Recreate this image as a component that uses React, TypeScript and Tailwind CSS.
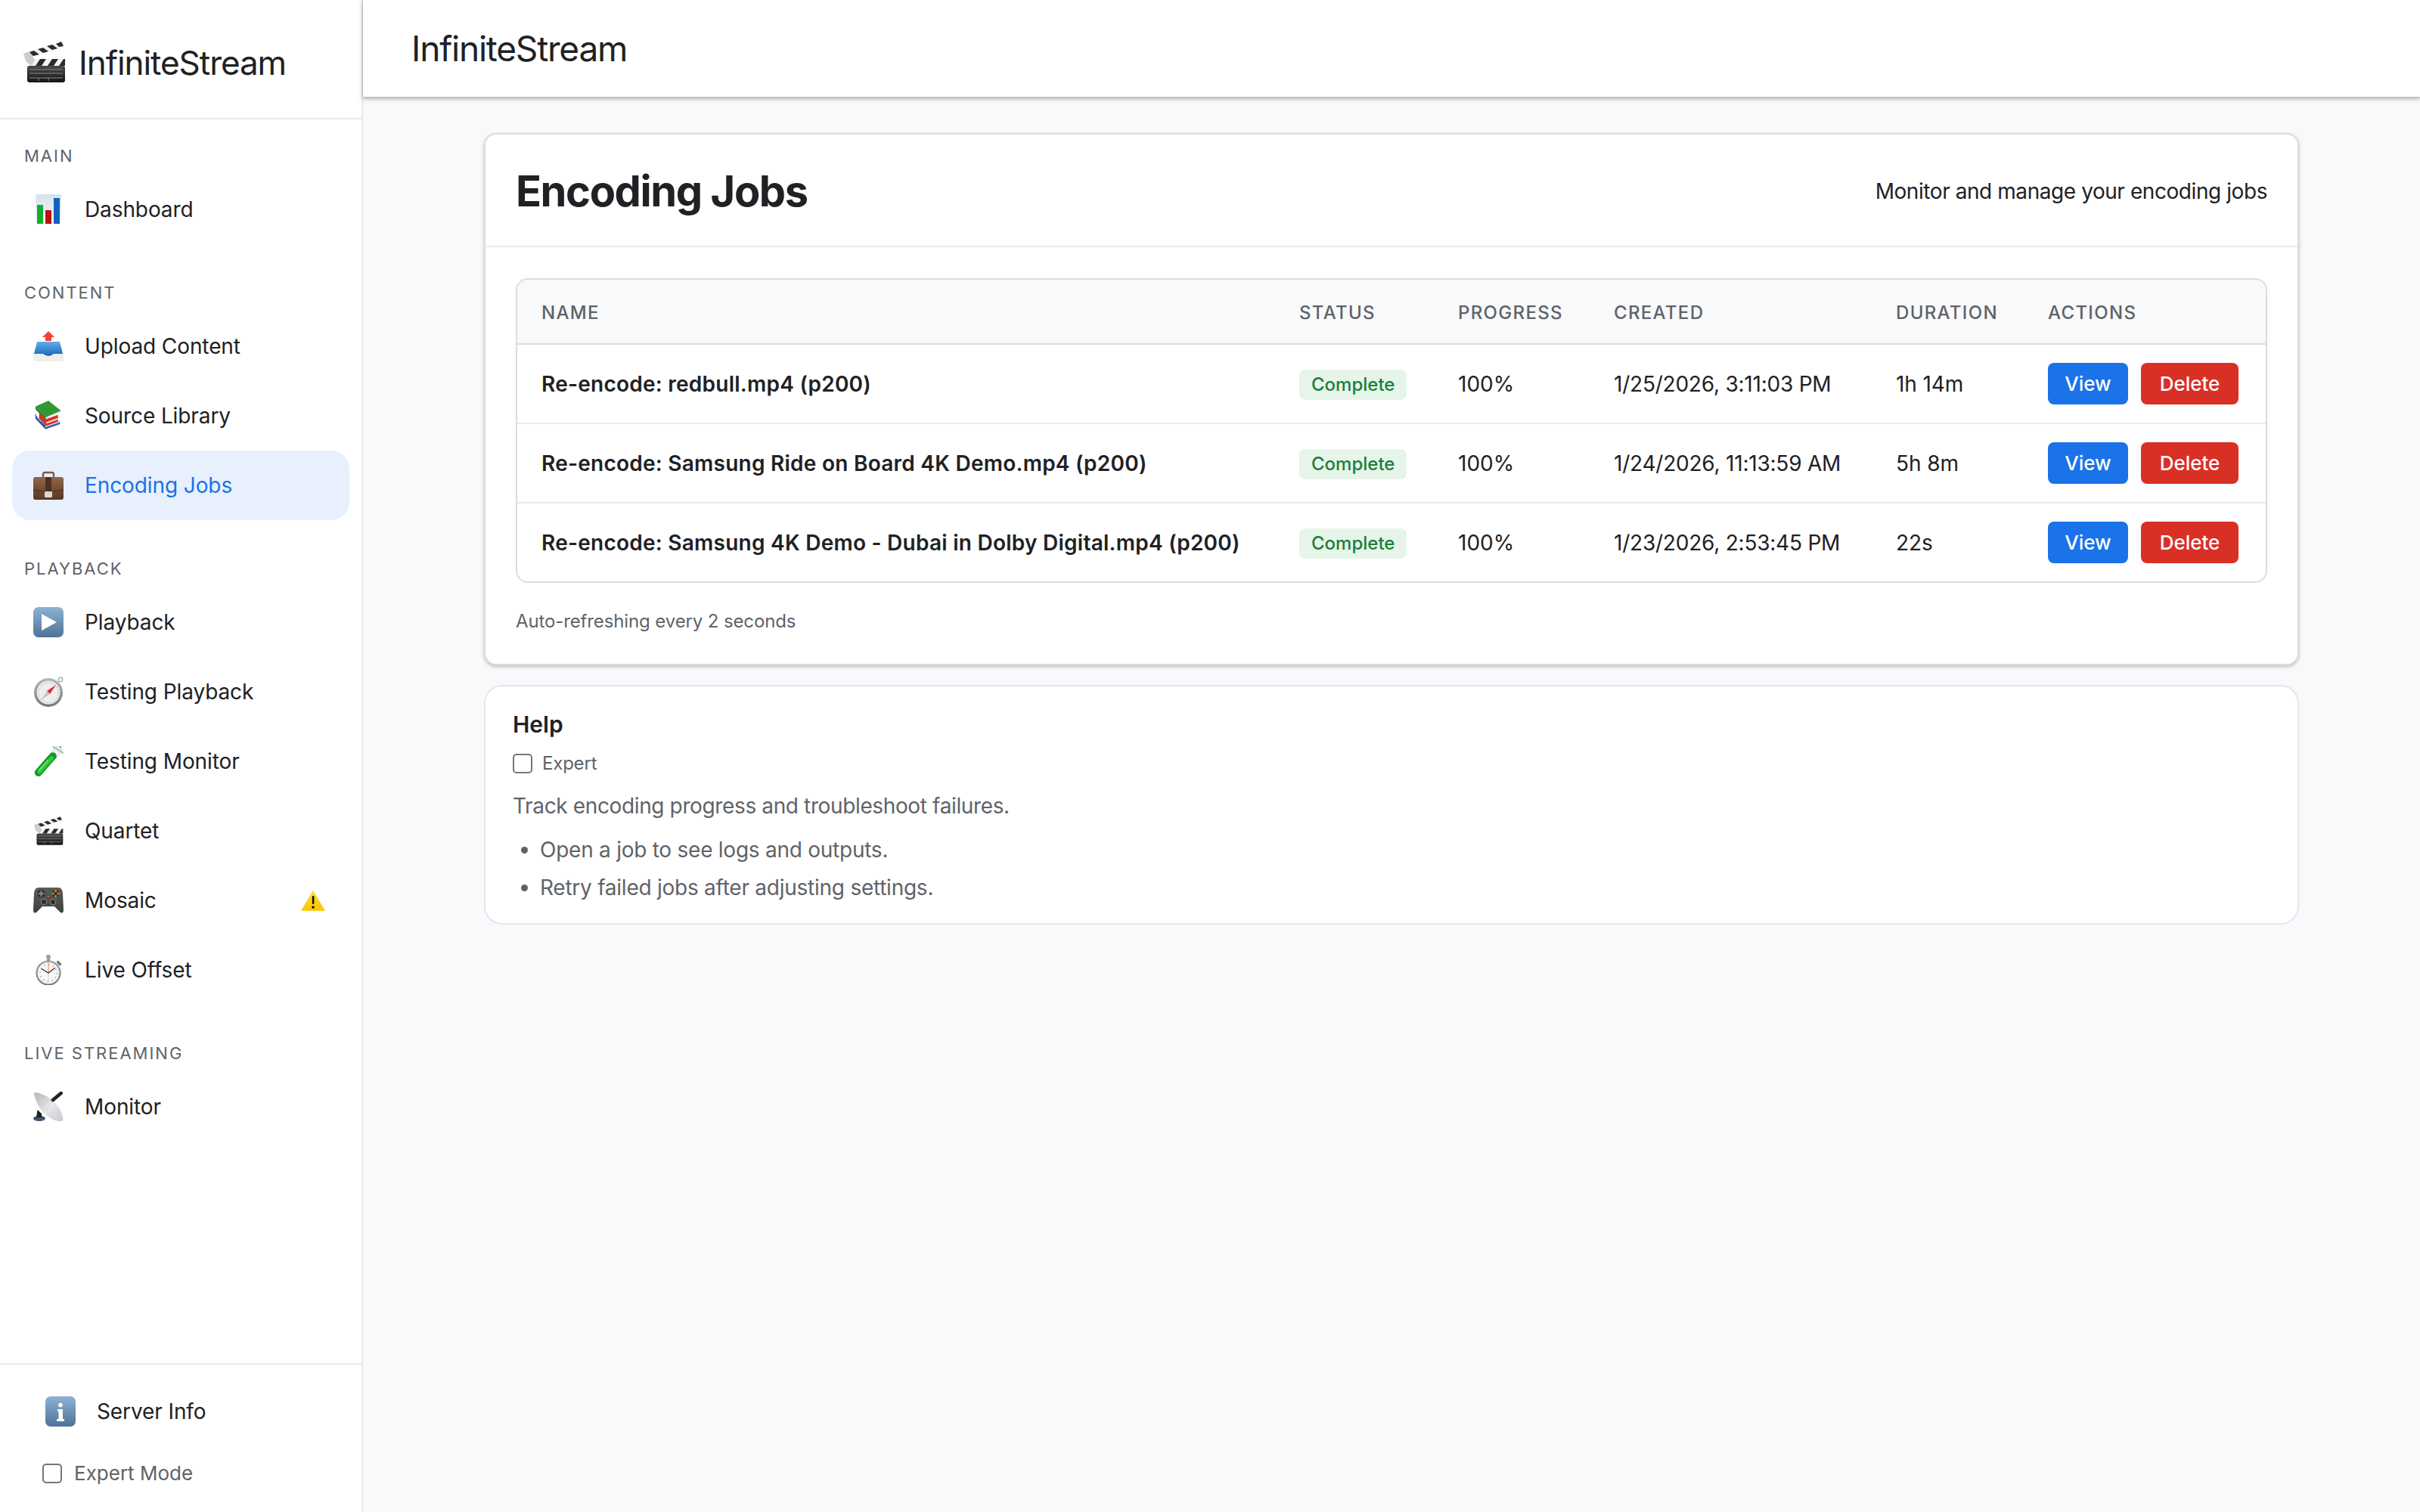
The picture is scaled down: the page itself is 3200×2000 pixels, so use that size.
import type { ReactNode } from "react";

function Clapper({ className }: { className?: string }) {
  return (
    <svg viewBox="0 0 56 54" className={className}>
      <defs>
        <linearGradient id="clapBody" x1="0" y1="0" x2="0" y2="1">
          <stop offset="0" stopColor="#4a4a4a" />
          <stop offset="1" stopColor="#151515" />
        </linearGradient>
      </defs>
      <path d="M0 16 L51 0 L54 7 L4 23 Z" fill="#f2f2f2" />
      <path d="M7 14 L14 12 L21 17 L13 19 Z M19 10 L26 8 L33 13 L26 15 Z M31 6 L38 4 L45 9 L38 11 Z M43 3 L50 0 L53 6 L47 7 Z" fill="#2c2c2c" />
      <path d="M13 23 H55 V32 H10 Z" fill="#f4f4f4" />
      <path d="M16 32 L22 23 H30 L24 32 Z M32 32 L38 23 H46 L40 32 Z M47 32 L53 23 H55 V32 Z" fill="#2b2b2b" />
      <path d="M0 16 L8 13 L15 25 L10 32 L3 26 Z" fill="#c9ced1" />
      <rect x="5" y="32" width="50" height="22" rx="3" fill="url(#clapBody)" />
      <path d="M8 37 H52 M8 42 H52 M8 48 H52" stroke="#8a8a8a" strokeWidth="1" />
      <path d="M20 48 V52 M33 48 V52" stroke="#8a8a8a" strokeWidth="1" />
    </svg>
  );
}

function BarChart() {
  return (
    <svg viewBox="0 0 40 40" className="w-[40px] h-[40px]">
      <defs>
        <linearGradient id="chartBg" x1="0" y1="0" x2="0" y2="1">
          <stop offset="0" stopColor="#d5e2ec" />
          <stop offset="1" stopColor="#f8fafb" />
        </linearGradient>
      </defs>
      <rect x="3" y="0" width="34" height="40" fill="url(#chartBg)" />
      <rect x="5" y="14" width="8" height="25" fill="#12b02d" />
      <rect x="16" y="21" width="8" height="18" fill="#bd1010" />
      <rect x="27" y="5" width="8" height="34" fill="#1360c0" />
    </svg>
  );
}

function Upload() {
  return (
    <svg viewBox="0 0 40 40" className="w-[40px] h-[40px]">
      <defs>
        <linearGradient id="trayBlue" x1="0" y1="0" x2="0" y2="1">
          <stop offset="0" stopColor="#63aee8" />
          <stop offset="1" stopColor="#1667b8" />
        </linearGradient>
      </defs>
      <path d="M20 0 L28 8 H24 V13 H16 V8 H12 Z" fill="#f2423c" />
      <path d="M5 17 H35 L40 30 V38 Q40 40 38 40 H2 Q0 40 0 38 V30 Z" fill="#eff0ec" />
      <path d="M5 14 H35 L39 30 H27 Q20 36 13 30 H1 Z" fill="url(#trayBlue)" />
    </svg>
  );
}

function Books() {
  return (
    <svg viewBox="0 -1 40 40" className="w-[40px] h-[40px]">
      <path d="M2 15.7 L3.3 23.3 L16 36.7 L35.3 30 V25.7 L17.7 32.3 L7.7 24.3 Z" fill="#2f57ab" />
      <path d="M15.5 34.2 L35 27.5 V25.7 L16.5 32.3 Z" fill="#e8e8e8" />
      <path d="M7.7 14.3 L16.7 23.3 L32.7 17.7 V26.7 L17.7 32.3 L7.7 23.3 Z" fill="#d8322a" />
      <path d="M17.5 29.2 L32.7 23.7 V22 L17 27.5 Z" fill="#f4eee6" />
      <path d="M2.7 6.7 L3.3 11 L16.7 23.3 V21 Z" fill="#1f7a27" />
      <path d="M16.7 21 L36.7 12.3 L36 15.7 L17.3 23.3 Z" fill="#f0f3e8" />
      <path d="M2.7 6.7 L20 -1 L36.7 12.3 L16.7 21 Z" fill="#2f9a34" />
    </svg>
  );
}

function Briefcase() {
  return (
    <svg viewBox="0 0 40 40" className="w-[40px] h-[40px]">
      <defs>
        <linearGradient id="caseBody" x1="0" y1="0" x2="0" y2="1">
          <stop offset="0" stopColor="#8f674b" />
          <stop offset="1" stopColor="#593724" />
        </linearGradient>
      </defs>
      <rect x="13" y="3" width="14" height="9" rx="2.5" fill="none" stroke="#7b5a44" strokeWidth="2.4" />
      <rect x="0" y="9" width="40" height="30" rx="3" fill="url(#caseBody)" />
      <path d="M0 26 Q20 31 40 26" fill="none" stroke="#4a2c1b" strokeWidth="1" />
      <rect x="16" y="9" width="8" height="20" fill="#4e3020" />
      <rect x="15" y="28" width="10" height="8" rx="1" fill="#d9d9d5" />
    </svg>
  );
}

function BlueSquare({ id, children }: { id: string; children: ReactNode }) {
  return (
    <svg viewBox="0 0 40 40" className="w-[40px] h-[40px]">
      <defs>
        <linearGradient id={id} x1="0" y1="0" x2="0" y2="1">
          <stop offset="0" stopColor="#8db2d4" />
          <stop offset="1" stopColor="#4f7398" />
        </linearGradient>
      </defs>
      <rect x="0" y="0" width="40" height="40" rx="7" fill={`url(#${id})`} />
      {children}
    </svg>
  );
}

function Compass() {
  return (
    <svg viewBox="0 0 40 40" className="w-[40px] h-[40px]">
      <defs>
        <linearGradient id="compassRim" x1="0" y1="0" x2="0" y2="1">
          <stop offset="0" stopColor="#b4b8ba" />
          <stop offset="1" stopColor="#73787a" />
        </linearGradient>
      </defs>
      <circle cx="36" cy="4" r="2.8" fill="#fff" stroke="#9a9ea0" strokeWidth="1.2" />
      <circle cx="20" cy="21" r="19" fill="url(#compassRim)" />
      <circle cx="20" cy="21" r="15.5" fill="#eeeeec" />
      <circle cx="20" cy="21" r="13" fill="none" stroke="#bbb" strokeWidth="2" strokeDasharray="1 2.5" />
      <path d="M30 11 L22 23 L18 19 Z" fill="#e8262a" />
      <path d="M10 31 L22 23 L18 19 Z" fill="#c8c8c8" />
    </svg>
  );
}

function TestTube() {
  return (
    <svg viewBox="0 0 40 40" className="w-[40px] h-[40px]">
      <path d="M32.7 5.3 L6.7 35" stroke="#c9d6cc" strokeWidth="10.5" strokeLinecap="round" />
      <path d="M32.7 5.3 L6.7 35" stroke="#eef3ef" strokeWidth="8.5" strokeLinecap="round" />
      <path d="M26 13 L6.7 35" stroke="#0f9a20" strokeWidth="9.5" strokeLinecap="round" />
      <path d="M24 16 L8 34" stroke="#35c53f" strokeWidth="5.5" strokeLinecap="round" />
      <path d="M19 19 L7.5 32" stroke="#8be58e" strokeWidth="1.4" strokeLinecap="round" />
      <path d="M26.7 1 L39 8.7" stroke="#b9c2bc" strokeWidth="2.6" strokeLinecap="round" />
      <circle cx="36" cy="1" r="1.4" fill="#5fd66a" />
    </svg>
  );
}

function Controller() {
  return (
    <svg viewBox="0 0 40 40" className="w-[40px] h-[40px]">
      <defs>
        <linearGradient id="padBody" x1="0" y1="0" x2="0" y2="1">
          <stop offset="0" stopColor="#5b5c58" />
          <stop offset="1" stopColor="#3f403d" />
        </linearGradient>
      </defs>
      <path d="M7 3 H33 Q38 3 39 10 L40 32 Q40 38 36 36 L28 28 H12 L4 36 Q0 38 0 32 L1 10 Q2 3 7 3 Z" fill="url(#padBody)" />
      <circle cx="10.5" cy="11" r="6" fill="#2f2f2d" stroke="#6d6e6a" strokeWidth="0.8" />
      <path d="M10.5 7 V15 M6.5 11 H14.5" stroke="#8a8b87" strokeWidth="2" />
      <circle cx="29.5" cy="11" r="6" fill="#2f2f2d" stroke="#6d6e6a" strokeWidth="0.8" />
      <circle cx="29.5" cy="7.5" r="1.8" fill="#ef6a1d" />
      <circle cx="33" cy="11" r="1.8" fill="#ef6a1d" />
      <circle cx="26" cy="11" r="1.8" fill="#8a8b87" />
      <circle cx="29.5" cy="14.5" r="1.8" fill="#8a8b87" />
      <circle cx="14" cy="22" r="3.8" fill="#2f2f2d" stroke="#8a8b87" strokeWidth="1" />
      <circle cx="26" cy="22" r="3.8" fill="#2f2f2d" stroke="#8a8b87" strokeWidth="1" />
      <circle cx="20" cy="15" r="1" fill="#ef6a1d" />
    </svg>
  );
}

function Stopwatch() {
  return (
    <svg viewBox="0 0 40 40" className="w-[40px] h-[40px]">
      <defs>
        <linearGradient id="watchRim" x1="0" y1="0" x2="0" y2="1">
          <stop offset="0" stopColor="#8f9498" />
          <stop offset="1" stopColor="#656b70" />
        </linearGradient>
      </defs>
      <rect x="18" y="3" width="4" height="6" fill="#8f969c" />
      <circle cx="20" cy="2.6" r="3" fill="#9aa1a7" />
      <path d="M32.5 9.5 L35.5 12.5" stroke="#6f757a" strokeWidth="3.2" strokeLinecap="round" />
      <circle cx="20" cy="24" r="16.5" fill="url(#watchRim)" />
      <circle cx="20" cy="24" r="14.8" fill="#d5d8da" />
      <circle cx="20" cy="24" r="13.6" fill="#f8f8f6" />
      <circle cx="20" cy="24" r="11" fill="none" stroke="#a0a0a0" strokeWidth="2" strokeDasharray="1.2 4.56" />
      <path d="M20 10.5 V24" stroke="#ef9f7e" strokeWidth="1.4" />
      <path d="M20 24 V36" stroke="#efc3b0" strokeWidth="1" />
      <path d="M20 24 L11 18.5 M20 24 L28.5 17.5" stroke="#2a2a2a" strokeWidth="1.2" strokeLinecap="round" />
    </svg>
  );
}

function Dish() {
  return (
    <svg viewBox="0 0 40 40" className="w-[40px] h-[40px]">
      <defs>
        <linearGradient id="dishFace" x1="0" y1="0" x2="1" y2="1">
          <stop offset="0" stopColor="#b4b8bb" />
          <stop offset="0.55" stopColor="#e4e5e7" />
          <stop offset="1" stopColor="#c9cbce" />
        </linearGradient>
      </defs>
      <ellipse cx="8" cy="35.5" rx="8" ry="3.4" fill="#40546e" />
      <path d="M4 34 L5.5 24 L11 29 L11.5 34 Z" fill="#1d2229" />
      <path d="M1 1 C14 1 36 14 39.5 36 Q39 40 35 39.5 C18 37 3 20 1 1 Z" fill="url(#dishFace)" />
      <path d="M14.3 21 L26 11 M20 26 L27 12" stroke="#f8f8f8" strokeWidth="0.8" />
      <path d="M26 11 L36.7 2" stroke="#202226" strokeWidth="4.6" strokeLinecap="round" />
    </svg>
  );
}

function Warning() {
  return (
    <svg viewBox="0 0 32 28" className="w-[32px] h-[28px]">
      <defs>
        <linearGradient id="warnFill" x1="0" y1="0" x2="0" y2="1">
          <stop offset="0" stopColor="#ffdf3a" />
          <stop offset="1" stopColor="#fcc400" />
        </linearGradient>
      </defs>
      <path d="M16 0.5 L31.5 27 Q31.6 27.8 31 27.8 H1 Q0.4 27.8 0.5 27 Z" fill="url(#warnFill)" />
      <rect x="14.8" y="8" width="2.6" height="11" rx="1.2" fill="#111" />
      <circle cx="16" cy="23" r="1.8" fill="#111" />
    </svg>
  );
}

function NavItem({ icon, label, active, trailing }: { icon: ReactNode; label: string; active?: boolean; trailing?: ReactNode }) {
  return (
    <div
      className={
        active
          ? "flex items-center h-[92px] mx-[16px] pl-[28px] pr-[32px] gap-[28px] rounded-[24px] bg-[#e8f0fe] text-[#1a73e8]"
          : "flex items-center h-[92px] mx-[16px] pl-[28px] pr-[32px] gap-[28px] rounded-[24px] text-[#202124]"
      }
    >
      <span className="flex w-[40px] h-[40px] items-center justify-center shrink-0">{icon}</span>
      <span className="text-[28px] leading-[40px] tracking-[-0.1px]">{label}</span>
      {trailing && <span className="ml-auto flex items-center">{trailing}</span>}
    </div>
  );
}

function SectionLabel({ children }: { children: string }) {
  return (
    <div className="h-[26px] mb-[12px] pl-[32px] text-[22px] leading-[26px] tracking-[0.09em] uppercase text-[#5f6368]">
      {children}
    </div>
  );
}

function Sidebar() {
  return (
    <aside className="flex flex-col w-[480px] h-full shrink-0 bg-white border-r-2 border-[#e8eaed]">
      <div className="flex items-center h-[158px] shrink-0 pl-[31px] pt-[8px] gap-[17px] border-b-2 border-[#e8eaed]">
        <Clapper className="w-[56px] h-[54px]" />
        <span className="mt-[2px] text-[44px] leading-[56px] tracking-[-1.05px] text-[#202124]">InfiniteStream</span>
      </div>
      <nav className="flex flex-col flex-1 gap-[51px] pt-[35px]">
        <section>
          <SectionLabel>Main</SectionLabel>
          <NavItem icon={<BarChart />} label="Dashboard" />
        </section>
        <section>
          <SectionLabel>Content</SectionLabel>
          <NavItem icon={<Upload />} label="Upload Content" />
          <NavItem icon={<Books />} label="Source Library" />
          <NavItem icon={<Briefcase />} label="Encoding Jobs" active />
        </section>
        <section>
          <SectionLabel>Playback</SectionLabel>
          <NavItem
            icon={
              <BlueSquare id="playTile">
                <path d="M11 9 L31 20 L11 31 Z" fill="#fff" />
              </BlueSquare>
            }
            label="Playback"
          />
          <NavItem icon={<Compass />} label="Testing Playback" />
          <NavItem icon={<TestTube />} label="Testing Monitor" />
          <NavItem icon={<Clapper className="w-[39px] h-[38px]" />} label="Quartet" />
          <NavItem icon={<Controller />} label="Mosaic" trailing={<Warning />} />
          <NavItem icon={<Stopwatch />} label="Live Offset" />
        </section>
        <section>
          <SectionLabel>Live Streaming</SectionLabel>
          <NavItem icon={<Dish />} label="Monitor" />
        </section>
      </nav>
      <div className="h-[197px] shrink-0 border-t-2 border-[#e8eaed] pt-[16px]">
        <div className="flex items-center h-[92px] ml-[60px] gap-[28px] text-[#202124]">
          <BlueSquare id="infoTile">
            <circle cx="20" cy="11.5" r="2.8" fill="#fff" />
            <path d="M16 17 H23 V30 H25 V33 H15 V30 H17.5 V20 H16 Z" fill="#fff" />
          </BlueSquare>
          <span className="text-[28px] leading-[40px] tracking-[-0.1px]">Server Info</span>
        </div>
        <label className="flex items-center mt-[23px] ml-[56px] gap-[16px] text-[26px] leading-[26px] text-[#5f6368]">
          <input type="checkbox" className="appearance-none w-[26px] h-[26px] bg-white border-2 border-[#767676] rounded-[5px]" />
          Expert Mode
        </label>
      </div>
    </aside>
  );
}

const jobs = [
  { name: "Re-encode: redbull.mp4 (p200)", created: "1/25/2026, 3:11:03 PM", duration: "1h 14m" },
  { name: "Re-encode: Samsung Ride on Board 4K Demo.mp4 (p200)", created: "1/24/2026, 11:13:59 AM", duration: "5h 8m" },
  { name: "Re-encode: Samsung 4K Demo - Dubai in Dolby Digital.mp4 (p200)", created: "1/23/2026, 2:53:45 PM", duration: "22s" },
];

const columns = ["Name", "Status", "Progress", "Created", "Duration", "Actions"];

function JobsTable() {
  return (
    <div className="border-2 border-[#dadce0] rounded-[16px] overflow-hidden">
      <table className="w-full table-fixed border-separate border-spacing-0">
        <colgroup>
          <col className="w-[1002px]" />
          <col className="w-[210px]" />
          <col className="w-[206px]" />
          <col className="w-[373px]" />
          <col className="w-[201px]" />
          <col className="w-[320px]" />
        </colgroup>
        <thead>
          <tr>
            {columns.map((col) => (
              <th
                key={col}
                className="h-[86px] px-[32px] pt-[3px] bg-[#f8f9fa] border-b-2 border-[#dadce0] text-left text-[24px] font-medium tracking-[0.055em] uppercase text-[#5f6368]"
              >
                {col}
              </th>
            ))}
          </tr>
        </thead>
        <tbody>
          {jobs.map((job, i) => {
            const cell = i < jobs.length - 1 ? "h-[105px] px-[32px] border-b-2 border-[#e8eaed]" : "h-[103px] px-[32px]";
            return (
              <tr key={job.name} className="text-[28px] text-[#202124]">
                <td className={cell + " font-semibold tracking-[0.25px] whitespace-nowrap"}>{job.name}</td>
                <td className={cell}>
                  <span className="inline-block mt-[3px] h-[40px] px-[16px] rounded-[8px] bg-[#e6f4ea] text-[24px] leading-[40px] font-medium text-[#188038]">
                    Complete
                  </span>
                </td>
                <td className={cell}>100%</td>
                <td className={cell + " tracking-[-0.22px] whitespace-nowrap"}>{job.created}</td>
                <td className={cell + " tracking-[-0.1px]"}>{job.duration}</td>
                <td className={cell}>
                  <div className="flex gap-[17px]">
                    <button className="w-[106px] h-[55px] rounded-[8px] bg-[#1a73e8] text-[26px] font-medium text-white">View</button>
                    <button className="w-[129px] h-[55px] rounded-[8px] bg-[#d93025] text-[26px] font-medium text-white">Delete</button>
                  </div>
                </td>
              </tr>
            );
          })}
        </tbody>
      </table>
    </div>
  );
}

export default function App() {
  return (
    <div className="flex w-full h-screen overflow-hidden bg-[#f8f9fa] [font-family:Inter,sans-serif]">
      <Sidebar />
      <div className="flex flex-col flex-1 min-w-0">
        <header className="flex items-center h-[128px] shrink-0 pl-[64px] bg-white shadow-[0_2px_4px_rgba(60,64,67,0.3),0_2px_6px_2px_rgba(60,64,67,0.15)]">
          <h1 className="text-[46px] leading-[56px] tracking-[-1.2px] text-[#202124]">InfiniteStream</h1>
        </header>
        <main className="flex-1 pt-[48px] px-[160px]">
          <div className="bg-white border-2 border-[#dadce0] rounded-[16px] shadow-[0_2px_4px_rgba(60,64,67,0.3)]">
            <div className="flex items-center justify-between h-[149px] px-[40px] pt-[2px] border-b-2 border-[#e8eaed]">
              <h2 className="text-[56px] leading-[68px] font-bold tracking-[-1.4px] text-[#202124]">Encoding Jobs</h2>
              <p className="text-[28px] tracking-[-0.43px] text-[#202124]">Monitor and manage your encoding jobs</p>
            </div>
            <div className="px-[40px] pt-[41px] pb-[38px]">
              <JobsTable />
              <p className="mt-[33px] text-[24px] leading-[36px] tracking-[-0.12px] text-[#5f6368]">Auto-refreshing every 2 seconds</p>
            </div>
          </div>
          <div className="mt-[26px] pt-[32px] pb-[26px] px-[36px] bg-white border-2 border-[#e3e8ef] rounded-[24px]">
            <h3 className="text-[30px] leading-[36px] font-semibold text-[#202124]">Help</h3>
            <label className="flex items-center mt-[21px] gap-[13px] text-[24px] leading-[26px] tracking-[-0.2px] text-[#5f6368]">
              <input type="checkbox" className="appearance-none w-[26px] h-[26px] bg-white border-2 border-[#767676] rounded-[5px]" />
              Expert
            </label>
            <p className="mt-[22px] text-[28px] leading-[42px] tracking-[-0.37px] text-[#5f6368]">Track encoding progress and troubleshoot failures.</p>
            <ul className="mt-[16px] pl-[36px] list-disc flex flex-col gap-[8px] text-[28px] leading-[42px] tracking-[-0.25px] text-[#5f6368]">
              <li>Open a job to see logs and outputs.</li>
              <li>Retry failed jobs after adjusting settings.</li>
            </ul>
          </div>
        </main>
      </div>
    </div>
  );
}
